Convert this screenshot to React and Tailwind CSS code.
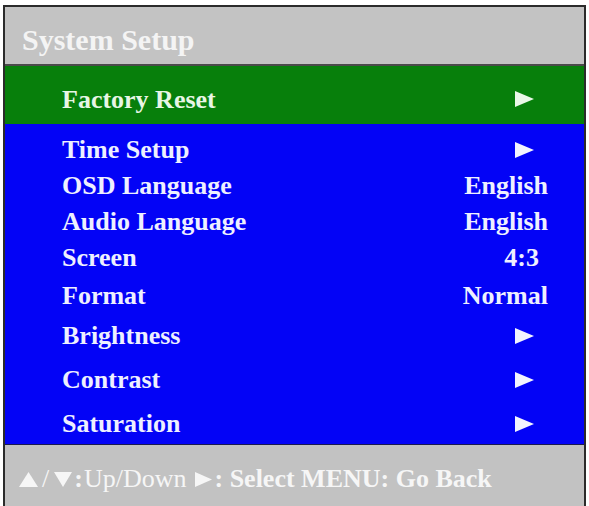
import React from "react";

const serif = { fontFamily: '"Liberation Serif", "Times New Roman", serif' };

function Arrow({ color = "#f2f4ff" }) {
  return (
    <svg width="21" height="18" viewBox="0 0 21 18" className="block">
      <polygon points="1,1 20,9 1,17" fill={color} />
    </svg>
  );
}

const rows = [
  { label: "Time Setup", value: "arrow", h: "h-[36px]" },
  { label: "OSD Language", value: "English", h: "h-[36px]" },
  { label: "Audio Language", value: "English", h: "h-[36px]" },
  { label: "Screen", value: "4:3", h: "h-[37px]" },
  { label: "Format", value: "Normal", h: "h-[38px]" },
  { label: "Brightness", value: "arrow", h: "h-[42px]" },
  { label: "Contrast", value: "arrow", h: "h-[46px]" },
  { label: "Saturation", value: "arrow", h: "h-[42px]" },
];

export default function App() {
  return (
    <div className="w-[589px] h-[506px] overflow-hidden bg-white pt-[5px] pl-[3px]" style={serif}>
      <div className="w-[583px] h-[540px] border-2 border-[#2b2b2b] flex flex-col">
        <div className="h-[59px] bg-[#c3c3c3] border-b-2 border-[#4a4a4a] flex items-center pl-[17px] pt-[9px]">
          <span className="text-[30px] font-bold leading-none text-[#f4f4f4]">System Setup</span>
        </div>
        <div className="h-[58px] bg-[#077f0b] flex items-center justify-between pl-[57px] pr-[49px] pt-[10px]">
          <span className="text-[26px] font-bold leading-none text-[#e8f6e6]">Factory Reset</span>
          <span className="-mt-[2px]">
            <Arrow color="#eaf8e8" />
          </span>
        </div>
        <div className="bg-[#0303f6] pt-[6px] pb-[1px] border-b border-[#1a1a50]">
          {rows.map((r) => (
            <div key={r.label} className={`${r.h} flex items-center justify-between pl-[57px] pr-[36px] pt-[3px]`}>
              <span className="text-[26px] font-bold leading-none text-[#eef0ff]">{r.label}</span>
              {r.value === "arrow" ? (
                <span className="mr-[13px]">
                  <Arrow />
                </span>
              ) : (
                <span
                  className={`text-[26px] font-bold leading-none text-[#eef0ff] ${r.value === "4:3" ? "mr-[9px]" : ""}`}
                >
                  {r.value}
                </span>
              )}
            </div>
          ))}
        </div>
        <div className="flex-1 bg-[#c2c2c2] pt-[21px] pl-[14px]">
          <div className="flex items-center text-[26px] leading-none text-[#f6f6f6]">
            <svg width="19" height="15" viewBox="0 0 19 15" className="block">
              <polygon points="9.5,0 19,15 0,15" fill="#f6f6f6" />
            </svg>
            <span className="px-[4px]">/</span>
            <svg width="18" height="15" viewBox="0 0 18 15" className="block ml-[1px]">
              <polygon points="0,0 18,0 9,15" fill="#f6f6f6" />
            </svg>
            <span className="font-bold ml-[2px]">:</span>
            <span className="ml-[1px]">Up/Down</span>
            <svg width="17" height="15" viewBox="0 0 17 15" className="block ml-[9px]">
              <polygon points="0,0 17,7.5 0,15" fill="#f6f6f6" />
            </svg>
            <span className="font-bold ml-[2px]">: Select MENU: Go Back</span>
          </div>
        </div>
      </div>
    </div>
  );
}
